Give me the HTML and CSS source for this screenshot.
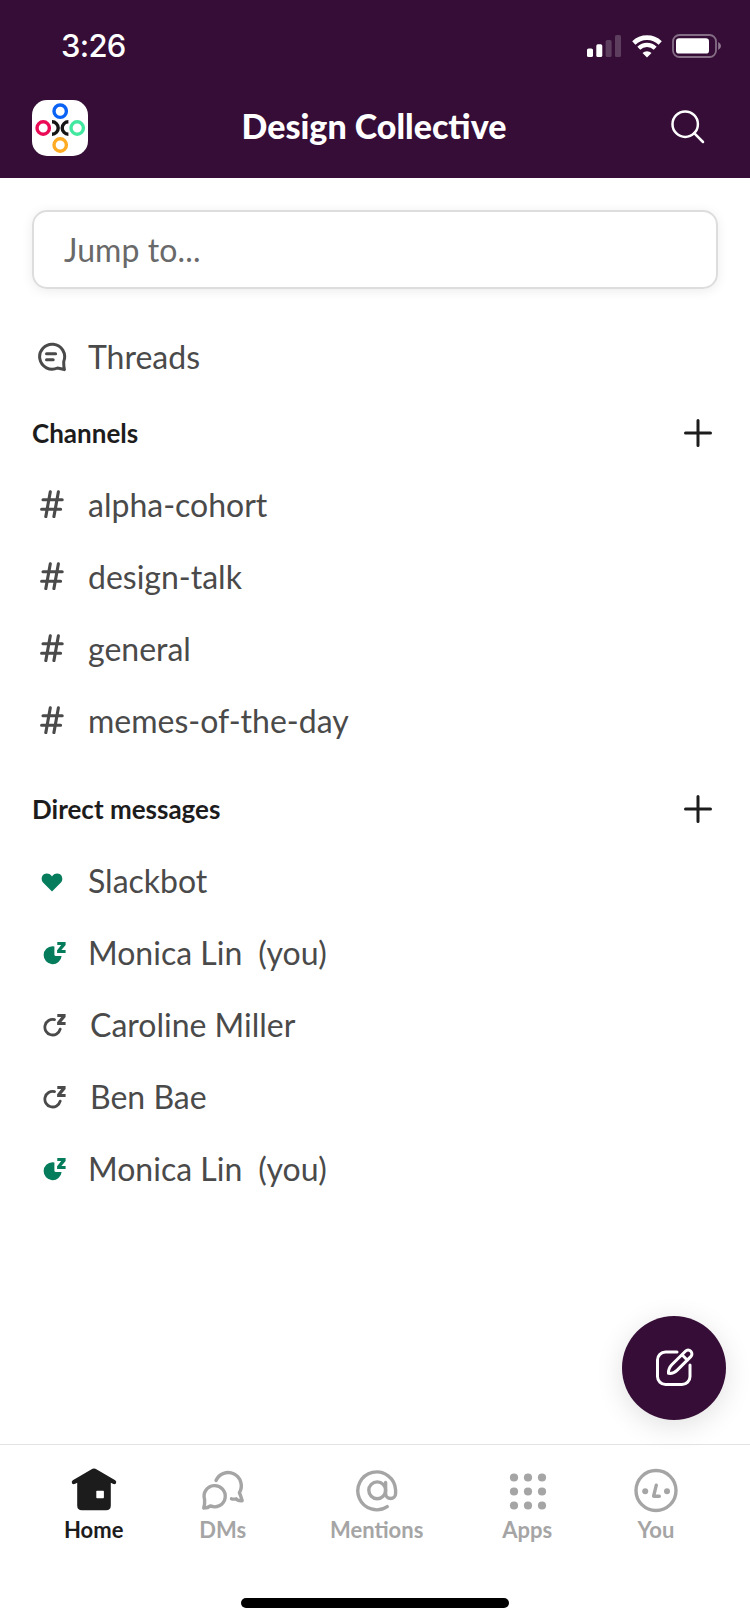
FILE: index.html
```html
<!DOCTYPE html>
<html lang="en">
<head>
<meta charset="utf-8">
<title>Design Collective</title>
<link rel="stylesheet" href="styles.css">
</head>
<body>
<svg width="0" height="0" class="defs">
  <symbol id="hash" viewBox="0 0 24 28"><path d="M10.3 1.8 5.8 26.6M18.4 1.8 13.9 26.6M3 9.8H22.2M1.6 19.2H20.6" fill="none" stroke="currentColor" stroke-width="3.1" stroke-linecap="round"/></symbol>
  <symbol id="plus" viewBox="0 0 28 28"><path d="M14 1.5V26.5M1.5 14H26.5" fill="none" stroke="currentColor" stroke-width="3" stroke-linecap="round"/></symbol>
  <symbol id="zed" viewBox="0 0 24 24"><path d="M14.3 1H22.6V4L18.4 9H22.6V12H14.1V9.2L18.2 4H14.3Z" fill="currentColor"/></symbol>
  <symbol id="away" viewBox="0 0 24 24"><path d="M9.5 5.2A9 9 0 1 0 18.6 15H13A1.6 1.6 0 0 1 11.4 13.4V5.4Q10.4 5.2 9.5 5.2Z" fill="currentColor"/><use href="#zed"/></symbol>
  <symbol id="away-off" viewBox="0 0 24 24"><path d="M11.5 6.6A7.8 7.8 0 1 0 17.2 16.2" fill="none" stroke="currentColor" stroke-width="2.8" stroke-linecap="round"/><use href="#zed"/></symbol>
</svg>
<div class="screen">
  <header class="top">
    <div class="status">
      <span class="time">3:26</span>
      <div class="indicators">
        <svg class="signal" width="35" height="22" viewBox="0 0 35 22" fill="#fff"><rect x="0" y="13.5" width="6" height="8.5" rx="1.6"/><rect x="9.3" y="9.3" width="6" height="12.7" rx="1.6"/><g opacity=".2"><rect x="18.6" y="5" width="6" height="17" rx="1.6"/><rect x="28" y="0" width="6" height="22" rx="1.6"/></g></svg>
        <svg class="wifi" width="30" height="23" viewBox="0 0 30 23" fill="none" stroke="#fff"><path d="M1.8 8A19 19 0 0 1 28.2 8" stroke-width="4.6"/><path d="M6.8 13.2A11.8 11.8 0 0 1 23.2 13.2" stroke-width="4.2"/><path d="M15 22.6 10.5 18A6.4 6.4 0 0 1 19.5 18Z" fill="#fff" stroke="none"/></svg>
        <svg class="battery" width="50" height="24" viewBox="0 0 50 24"><rect x="1" y="1" width="43" height="22" rx="6.5" fill="none" stroke="#fff" stroke-opacity=".4" stroke-width="1.8"/><rect x="4" y="4.2" width="33" height="15.4" rx="3.2" fill="#fff"/><path d="M46.2 8Q49 9.5 49 12T46.2 16Z" fill="#fff" opacity=".45"/></svg>
      </div>
    </div>
    <div class="titlebar">
      <svg class="logo" width="56" height="56" viewBox="0 0 56 56" fill="none" stroke-width="3.4"><rect width="56" height="56" rx="15" fill="#fff"/><circle cx="28.2" cy="11.2" r="6.2" stroke="#0b63f6"/><circle cx="11.2" cy="28" r="6.2" stroke="#ea0a55"/><circle cx="45.2" cy="28" r="6.2" stroke="#43e8a0"/><circle cx="28.2" cy="45" r="6.2" stroke="#ffab24"/><path d="M20 21.8A6.2 6.2 0 0 1 20 34.2M36.4 21.8A6.2 6.2 0 0 0 36.4 34.2" stroke="#151515"/></svg>
      <h1>Design Collective</h1>
      <svg class="search-icon" width="34" height="34" viewBox="0 0 34 34" fill="none" stroke="#fff" stroke-width="2.5" stroke-linecap="round"><circle cx="14.2" cy="14.2" r="12.7"/><path d="M23.2 23.2 32 32"/></svg>
    </div>
  </header>
  <main>
    <div class="jump">Jump to...</div>
    <div class="row threads"><span class="icon"><svg width="30" height="30" viewBox="0 0 30 30" fill="none" stroke="currentColor" stroke-width="3" stroke-linecap="round" stroke-linejoin="round"><path d="M26.8 19.2A12.5 12.5 0 1 0 20.5 26Q24 26.6 27.4 27.6Q26.5 23.5 26.8 19.2Z"/><path d="M9.5 11.8H18.6M9.5 17.8H16.2"/></svg></span><span>Threads</span></div>
    <div class="heading"><h2>Channels</h2><svg class="plus"><use href="#plus"/></svg></div>
    <div class="row"><span class="icon"><svg class="hash"><use href="#hash"/></svg></span><span>alpha-cohort</span></div>
    <div class="row"><span class="icon"><svg class="hash"><use href="#hash"/></svg></span><span>design-talk</span></div>
    <div class="row"><span class="icon"><svg class="hash"><use href="#hash"/></svg></span><span>general</span></div>
    <div class="row"><span class="icon"><svg class="hash"><use href="#hash"/></svg></span><span>memes-of-the-day</span></div>
    <div class="heading direct"><h2>Direct messages</h2><svg class="plus"><use href="#plus"/></svg></div>
    <div class="row"><span class="icon"><svg class="heart" width="22" height="19" viewBox="0 0 22 19" fill="#057c5b"><path d="M11 18.5 1.8 9.3C-.5 6.6 .7 .8 5.6 .6 8.2 .6 9.8 1.8 11 3.5 12.2 1.8 13.8 .6 16.4 .6 21.3 .8 22.5 6.6 20.2 9.3Z"/></svg></span><span>Slackbot</span></div>
    <div class="row"><span class="icon"><svg class="presence on"><use href="#away"/></svg></span><span>Monica Lin</span><span class="you">(you)</span></div>
    <div class="row shifted"><span class="icon"><svg class="presence"><use href="#away-off"/></svg></span><span>Caroline Miller</span></div>
    <div class="row shifted"><span class="icon"><svg class="presence"><use href="#away-off"/></svg></span><span>Ben Bae</span></div>
    <div class="row"><span class="icon"><svg class="presence on"><use href="#away"/></svg></span><span>Monica Lin</span><span class="you">(you)</span></div>
  </main>
  <div class="compose"><svg width="40" height="40" viewBox="0 0 40 40" fill="none" stroke="#fff" stroke-width="3" stroke-linecap="round" stroke-linejoin="round"><path d="M23 4H11.5A8 8 0 0 0 3.5 12V28.5A8 8 0 0 0 11.5 36.5H28A8 8 0 0 0 36 28.5V17"/><path d="M14.5 25.3Q14.2 20.5 17.8 16.8L31.4 3.2A3.7 3.7 0 0 1 36.8 8.6L23 22.4Q19.3 26 14.5 25.3ZM28 6.8 33.4 12.2"/></svg></div>
  <nav>
    <div class="tab active"><svg width="46" height="46" viewBox="0 0 46 46"><path d="M23 1.5Q24.4 1.5 25.8 2.4L44.2 13.2Q46 14.6 44.9 16.4 43.8 17.7 41.8 16.8L39.8 15.8V38.5Q39.8 43.3 35 43.3H11Q6.2 43.3 6.2 38.5V15.8L4.2 16.8Q2.2 17.7 1.1 16.4 0 14.6 1.8 13.2L20.2 2.4Q21.6 1.5 23 1.5Z" fill="#1d1c1d"/><rect x="25.3" y="23.7" width="7.6" height="7.6" rx=".8" fill="#fff"/></svg><span>Home</span></div>
    <div class="tab dms"><svg width="46" height="46" viewBox="0 0 46 46" fill="none" stroke="#a5a5a5" stroke-width="3.4" stroke-linecap="round" stroke-linejoin="round"><path d="M16 13.5A13.2 13.2 0 1 1 39.4 25.6Q41 29.5 42.2 33.7Q37.5 34 36.2 31.8Q34 32.4 31.5 31.8"/><path d="M4.6 32.5Q5 36.5 3.7 41Q8 41 10.4 38.9A10.6 10.6 0 1 0 4.6 32.5Z"/></svg><span>DMs</span></div>
    <div class="tab"><svg width="46" height="46" viewBox="0 0 46 46" fill="none" stroke="#a5a5a5" stroke-width="3.4" stroke-linecap="round"><path d="M33.2 39.6A18.9 18.9 0 1 1 41.6 23V26.5A5 5 0 0 1 31.6 26.5V15.5"/><circle cx="23.2" cy="23.3" r="8.4"/></svg><span>Mentions</span></div>
    <div class="tab apps"><svg width="46" height="46" viewBox="0 0 46 46" fill="#a5a5a5"><g id="dots"><circle cx="10" cy="10.5" r="4.1"/><circle cx="24" cy="10.5" r="4.1"/><circle cx="38" cy="10.5" r="4.1"/></g><use href="#dots" y="14"/><use href="#dots" y="28"/></svg><span>Apps</span></div>
    <div class="tab"><svg width="46" height="46" viewBox="0 0 46 46" fill="none" stroke="#a5a5a5" stroke-width="3.4" stroke-linecap="round" stroke-linejoin="round"><circle cx="23" cy="23.5" r="20"/><path d="M23.3 18.2 20.6 29.2H26.3"/><g fill="#a5a5a5" stroke="none"><circle cx="12.2" cy="24.2" r="3"/><circle cx="34" cy="24.2" r="3"/></g></svg><span>You</span></div>
  </nav>
  <div class="home-indicator"></div>
</div>
</body>
</html>
```
FILE: styles.css
```css
* { box-sizing: border-box; }
body { margin: 0; background: #fff; font-family: Lato, sans-serif; color: #4a4a4a; }
svg { display: block; }
.defs { position: absolute; }
.screen { position: relative; width: 750px; height: 1624px; overflow: hidden; display: flex; flex-direction: column; }
.top { height: 178px; background: #350d36; color: #fff; flex: none; }
.status { height: 92px; padding: 0 28px 0 61px; display: flex; justify-content: space-between; align-items: center; }
.time { font: 500 31px/36px Inter, sans-serif; letter-spacing: -.7px; }
.indicators { display: flex; align-items: center; }
.signal { margin-right: 1px; }
.wifi { margin: 0 10px 0 9px; }
.titlebar { display: flex; align-items: center; justify-content: space-between; height: 72px; padding: 0 45px 0 32px; }
h1 { margin: 0 0 4px -11px; font-size: 34px; font-weight: 900; line-height: 40px; }
.search-icon { margin-bottom: 3px; }
main { flex: 1; padding: 32px 32px 0; }
.jump { height: 79px; border: 2px solid #ddd; border-radius: 15px; padding-left: 30px; font-size: 32px; line-height: 75px; letter-spacing: .1px; color: #696969; box-shadow: 0 2px 12px rgba(0,0,0,.08); margin-bottom: 32px; }
.row { height: 72px; display: flex; align-items: center; font-size: 32px; white-space: pre; }
.threads { padding-bottom: 1px; }
.icon { width: 56px; padding-left: 5px; flex: none; }
.hash { width: 24px; height: 28px; margin: 0 0 0 3px; }
.heart { margin: 5px 0 0 4px; }
.presence { width: 24px; height: 24px; margin: 1px 0 0 5.5px; }
.on { color: #057c5b; }
.you { margin-left: 16px; }
.shifted .icon { width: 58px; }
.heading { height: 75px; padding: 5px 6px 0 0; display: flex; align-items: center; justify-content: space-between; color: #1d1c1d; }
.heading h2 { margin: 0; font-size: 26px; font-weight: 700; }
.plus { width: 28px; height: 28px; }
.direct { height: 88px; padding-top: 17px; }
.compose { position: absolute; left: 622px; top: 1316px; width: 104px; height: 104px; border-radius: 50%; background: #350d36; display: flex; align-items: center; justify-content: center; box-shadow: 0 6px 28px rgba(0,0,0,.12); }
nav { height: 180px; border-top: 1px solid #e3e3e3; background: #fff; display: flex; justify-content: space-between; padding: 22px 71px 0 64px; flex: none; }
.tab { display: flex; flex-direction: column; align-items: center; color: #a5a5a5; font-size: 22px; font-weight: 700; line-height: 26px; gap: 4px; height: 90px; }
.dms { margin: 0 4px 0 -4px; }
.apps { margin: 0 1px 0 -1px; }
.active { color: #1d1c1d; }
.home-indicator { position: absolute; left: 241px; top: 1598px; width: 268px; height: 10px; border-radius: 5px; background: #000; }
```
